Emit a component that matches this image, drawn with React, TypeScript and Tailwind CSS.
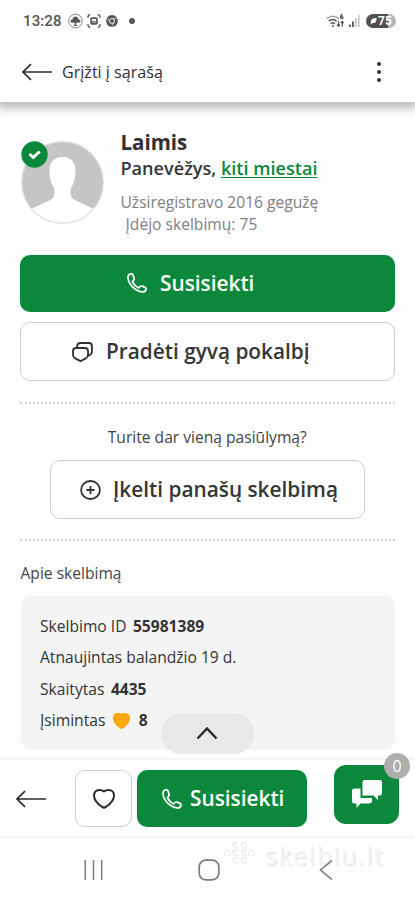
import type { ReactNode } from 'react'

const adDetails = [
  { label: 'Skelbimo ID', value: '55981389' },
  { label: 'Atnaujintas balandžio 19 d.', value: '' },
  { label: 'Skaitytas', value: '4435' },
  { label: 'Įsimintas', value: '8', liked: true },
]

function BackArrow() {
  return (
    <svg width="30" height="18" viewBox="0 0 30 18" fill="none" stroke="#2b2b2b" strokeWidth="1.7" className="shrink-0">
      <path d="M9 1.2 1 9l8 7.8M1 9h29" />
    </svg>
  )
}

function PhoneIcon() {
  return (
    <svg width="20" height="20" viewBox="0 0 20 20" fill="none" stroke="#fff" strokeWidth="1.7" strokeLinejoin="round" className="shrink-0">
      <path d="M3.200 1C1.700 1.500.9 3 1 5c.6 6.500 7.500 13.400 14.300 14 2 .1 3.500-1 3.700-2.900.1-1.100-.4-1.600-1.400-2l-2.600-1c-1-.3-1.700 0-2.500.9l-.8.9C9 13.600 6.400 11 5.300 8.400l1-.8c.9-.8 1.100-1.500.8-2.500L6 2C5.500.8 4.400.6 3.200 1Z" />
    </svg>
  )
}

function ChatIcon() {
  return (
    <svg width="21" height="20" viewBox="0 0 21 20" fill="none" stroke="#303030" strokeWidth="1.8" strokeLinejoin="round" className="shrink-0">
      <path d="M4.200 6h8.600Q16 6 16 9v3.800q0 2.600-2.200 3.600l-5.300 2.700-5.300-2.700Q1 15.400 1 12.800V9q0-3 3.200-3Z" />
      <path d="M5.200 5.600V4.200Q5.400 1 8.400 1h8.400Q20 1 20 4v5q0 3.500-3.800 4.800" />
    </svg>
  )
}

function StatusBar() {
  return (
    <div className="flex h-[42px] items-center pl-[23px] pr-[19px]">
      <span className="w-[45px] whitespace-nowrap font-['Roboto'] text-[15px] font-medium leading-5 tracking-[0.1px] text-[#555]">13:28</span>
      <svg width="15" height="16" viewBox="0 0 15 16" className="shrink-0">
        <circle cx="7.500" cy="8" r="6.800" fill="none" stroke="#888" />
        <path d="M2.500 9c0-2 1-2.500 2-2.500C4.700 4.500 6 3.600 7.500 3.600s2.800.9 3 2.900c1.200 0 2 .7 2 2.500-1.500 1-2.700.7-4.200.4v2.500l1.700 1H5l1.700-1V9.400c-1.500.3-2.700.6-4.200-.4Z" fill="#555" />
      </svg>
      <svg width="14" height="16" viewBox="0 0 14 16" className="ml-1 shrink-0" fill="none" stroke="#555" strokeWidth="1.300">
        <path d="M1 5V4q0-2.300 2.300-2.300M10.700 1.700Q13 1.700 13 4v1M13 11v1q0 2.300-2.300 2.300M3.300 14.300Q1 14.300 1 12v-1" />
        <rect x="4" y="5.200" width="6" height="5.600" rx="1" strokeWidth="1.700" />
        <path d="m4.500 10 2-1.500 3 1" />
      </svg>
      <svg width="12" height="12" viewBox="0 0 12 12" className="ml-[5px] shrink-0">
        <circle cx="6" cy="6" r="5.900" fill="#555" />
        <circle cx="6" cy="6" r="2.500" fill="#555" stroke="#eee" />
        <path d="M6 3.500h5M3.800 7.300 1.300 3M8.200 7.300 5.700 11.600" stroke="#ddd" strokeWidth=".7" />
      </svg>
      <span className="ml-[11px] size-[6px] rounded-full bg-[#555]" />
      <div className="ml-auto flex items-center">
        <svg width="19" height="14" viewBox="0 0 19 14" fill="none" stroke="#555" strokeWidth="1.400">
          <path d="M.8 4.600q6-5 12 0" stroke="#999" />
          <path d="M2.700 7.200q4-3.500 8 0M4.600 9.700q2.200-2 4.400 0" />
          <circle cx="6.900" cy="12" r="1" fill="#555" stroke="none" />
          <path d="M17 .8h-1.200q-1.300 0-1.300 2.200 0 1.700 1.300 1.700t1.300-1-1.300-1-1.300.8" strokeWidth="1.200" />
          <path d="M12.500 7v5m-1.400-1.500 1.400 1.700 1.400-1.700M16.300 12.700V7.500m-1.400 1.700 1.400-1.700 1.400 1.700" strokeWidth="1.200" />
        </svg>
        <svg width="11" height="14" viewBox="0 0 11 14" className="ml-[4px]">
          <rect y="10.500" width="1.800" height="2.500" fill="#555" />
          <rect x="3" y="7.500" width="1.800" height="5.500" fill="#555" />
          <rect x="6" y="4" width="1.600" height="9" fill="#c4c4c4" />
          <rect x="9" y="1" width="1.600" height="12" fill="#c4c4c4" />
        </svg>
        <span className="ml-[6px] flex h-[14px] w-[30px] items-center justify-center rounded-full bg-linear-to-r from-[#505050] from-75% to-[#b5b5b5] to-75% font-['Roboto'] text-[12px] font-bold leading-[14px] text-white">
          <svg width="7" height="8" viewBox="0 0 7 8" fill="#fff" className="mr-px">
            <path d="M1 4.500C1 1.500 4 1 6.500 1 6.800 4 5.500 6.500 2.500 6L.5 7.500Z" />
          </svg>
          75
        </span>
      </div>
    </div>
  )
}

function OutlineButton({ className, children }: { className: string; children: ReactNode }) {
  return (
    <button className={`flex items-center rounded-[10px] border border-[#cecece] whitespace-nowrap text-[20.800px] font-semibold text-[#363636] ${className}`}>
      {children}
    </button>
  )
}

function Seller() {
  return (
    <section className="flex h-[152.500px] pl-[20.500px] pt-[28px]">
      <div className="relative mt-[11px] size-[83px] shrink-0">
        <svg width="83" height="83" viewBox="0 0 83 83">
          <defs>
            <clipPath id="avatar">
              <circle cx="41.500" cy="41.500" r="40.500" />
            </clipPath>
          </defs>
          <g clipPath="url(#avatar)">
            <path fill="#c5c5c5" d="M0 0h83v83H0z" />
            <path fill="#fff" d="M41.500 16C33 16 28.500 22 28.500 29c0 8 1.500 14 5 18.500V52q0 5-4 7L10 68 0 75v8h83v-8l-10-7-19.500-9q-4-2-4-7v-4.500c3.500-4.500 5-10.500 5-18.500 0-7-4.500-13-13-13Z" />
          </g>
          <circle cx="41.500" cy="41.500" r="40.800" fill="none" stroke="#ddd" strokeWidth="1.200" />
        </svg>
        <svg width="27" height="27" viewBox="0 0 27 27" className="absolute left-0 top-0">
          <circle cx="13.500" cy="13.500" r="13.200" fill="#0b883b" />
          <path d="m8.500 13 3.800 3.500 6.400-6" fill="none" stroke="#fff" strokeWidth="3" />
        </svg>
      </div>
      <div className="ml-[17px] whitespace-nowrap">
        <h1 className="text-[20.500px] font-bold leading-[25px] text-[#303030]">Laimis</h1>
        <p className="text-[18.100px] font-semibold leading-[27px] text-[#363636]">
          Panevėžys, <a className="text-[#0b883b] underline underline-offset-2">kiti miestai</a>
        </p>
        <p className="mt-[9px] text-[15.600px] leading-[22px] text-[#808080]">Užsiregistravo 2016 gegužę</p>
        <p className="ml-[5px] text-[15.600px] leading-[22px] text-[#808080]">Įdėjo skelbimų: 75</p>
      </div>
    </section>
  )
}

function BottomBar() {
  return (
    <div className="flex h-[80px] items-start border-y-2 border-[#f5f5f5] bg-white pl-[16px] pt-[10px]">
      <div className="flex h-[57px] w-[59px] items-center">
        <BackArrow />
      </div>
      <button className="flex h-[57px] w-[57px] items-center justify-center rounded-[10px] border border-[#cecece]">
        <svg width="22" height="20" viewBox="0 0 22 20" fill="none" stroke="#2b2b2b" strokeWidth="2" strokeLinejoin="round" className="-mr-px mt-px">
          <path d="M11 2.400C9.500 1.400 8 1 6.200 1 3.200 1 1 3.300 1 6.500c0 5.200 4.200 8.800 8.200 11.400q1.800 1.400 3.600 0C16.800 15.300 21 11.700 21 6.500 21 3.300 18.800 1 15.800 1 14 1 12.500 1.400 11 2.400Z" />
        </svg>
      </button>
      <button className="ml-[5px] flex h-[57px] w-[170px] items-center rounded-[10px] bg-[#0b883b] pl-[25px] text-[20.800px] font-semibold text-white">
        <PhoneIcon />
        <span className="ml-[8px] whitespace-nowrap">Susisiekti</span>
      </button>
      <button className="relative -mt-[5.500px] ml-[27px] flex h-[59px] w-[65px] items-center justify-center rounded-[12px] bg-[#0b883b]">
        <svg width="32" height="30" viewBox="0 0 32 30" fill="#fff">
          <path d="M14 1h14.500q2.500 0 2.500 2.500v10.500q0 2.500-2.500 2.500H27V21l-4.500-4.500H11.500V3.500Q11.500 1 14 1Z" />
          <path d="M9.500 9.500v9.500h11.500v3q0 2-2.500 2.500H9.500L5.500 29v-4.500H3.500q-2.500 0-2.500-2.500V12q0-2.500 2.500-2.500Z" />
        </svg>
        <span className="absolute -right-[11px] -top-[12px] flex size-[26px] items-center justify-center rounded-full bg-[#aeaeae] text-[16px] text-white">0</span>
      </button>
    </div>
  )
}

function SystemNav() {
  return (
    <nav className="relative h-[62px] bg-[#fefefe]">
      <div className="absolute left-[223px] top-0 flex items-center text-[#f5f5f5]">
        <svg width="33" height="24" viewBox="0 0 33 24" fill="none" stroke="#ececec" strokeWidth="1.500" strokeDasharray="5 2" className="-mt-1">
          <path d="M10 2h4v5h-4zM19 2h4v5h-4zM2 9.500h5v5H2zM10 9.500h4v5h-4zM19 9.500h4v5h-4zM26 9.500h5v5h-5zM10 17h4v5h-4zM19 17h4v5h-4z" />
        </svg>
        <span className="ml-[9px] text-[25px] font-medium leading-[34px] tracking-[1.500px] [text-shadow:1px_1px_0_#e4e4e4]">skelbiu.lt</span>
      </div>
      <div className="relative flex h-full items-center pl-[84px] pt-[2px]">
        <svg width="19" height="20" viewBox="0 0 19 20" stroke="#7c7c7c" strokeWidth="1.500">
          <path d="M1.300 0v20M9.500 0v20M17.700 0v20" />
        </svg>
        <svg width="22" height="22" viewBox="0 0 22 22" fill="none" stroke="#7c7c7c" strokeWidth="1.700" className="ml-[95px]">
          <rect x="1.200" y="1.200" width="19.600" height="19.600" rx="6.500" />
        </svg>
        <svg width="14" height="20" viewBox="0 0 14 20" fill="none" stroke="#7c7c7c" strokeWidth="1.600" className="ml-[99px]">
          <path d="M13 .5 1.500 10 13 19.500" />
        </svg>
      </div>
    </nav>
  )
}

export default function App() {
  return (
    <div className="flex h-[900px] w-[415px] flex-col overflow-hidden bg-[#fefefe] font-['Open_Sans','Noto_Sans',sans-serif] text-[#333]">
      <header className="h-[102px] shrink-0 bg-[#fefefe] shadow-[0_3px_9px_3px_rgba(0,0,0,0.28)]">
        <StatusBar />
        <div className="flex h-[60px] items-center pl-[22px] pr-[34px]">
          <BackArrow />
          <span className="ml-[10px] whitespace-nowrap text-[16.100px] font-medium text-[#303030]">Grįžti į sąrašą</span>
          <div className="ml-auto flex flex-col gap-[4px]">
            <span className="size-[4px] rounded-full bg-[#333]" />
            <span className="size-[4px] rounded-full bg-[#333]" />
            <span className="size-[4px] rounded-full bg-[#333]" />
          </div>
        </div>
      </header>

      <main className="relative h-[656px] shrink-0">
        <Seller />
        <div className="pl-[20px] pr-[20.500px]">
          <button className="flex h-[57px] w-full items-center rounded-[10px] bg-[#0b883b] pl-[107px] text-[20.800px] font-semibold text-white">
            <PhoneIcon />
            <span className="ml-[13px] mt-px whitespace-nowrap">Susisiekti</span>
          </button>
          <OutlineButton className="mt-[10.500px] h-[59px] w-full pl-[51px]">
            <ChatIcon />
            <span className="ml-[13px]">Pradėti gyvą pokalbį</span>
          </OutlineButton>
          <hr className="mt-[21px] border-t-2 border-dotted border-[#d2d2d2]" />
          <p className="mt-[22px] text-center text-[15.600px] leading-[22px] text-[#444]">Turite dar vieną pasiūlymą?</p>
          <OutlineButton className="ml-[30px] mt-[12px] h-[59px] w-[315px] pl-[29px]">
            <svg width="21" height="20" viewBox="0 0 21 20" fill="none" stroke="#303030" strokeWidth="1.800">
              <ellipse cx="10.500" cy="10" rx="9.400" ry="9" />
              <path d="M10.500 6v8M6.500 10h8" />
            </svg>
            <span className="ml-[12px]">Įkelti panašų skelbimą</span>
          </OutlineButton>
          <hr className="mt-[20px] border-t-2 border-dotted border-[#d2d2d2]" />
          <h2 className="ml-[0.500px] mt-[19.500px] text-[15.600px] leading-[24px] text-[#444]">Apie skelbimą</h2>
          <dl className="ml-[0.500px] mt-[11.500px] h-[154px] rounded-[10px] bg-[#f4f4f4] pl-[19.500px] pt-[14.500px] text-[15.600px] text-[#333]">
            {adDetails.map((row) => (
              <div key={row.label} className="flex h-[31.500px] items-center whitespace-nowrap">
                <dt>{row.label}</dt>
                {row.liked && (
                  <svg width="17" height="16" viewBox="0 0 17 16" fill="#fba70e" className="ml-[8px] mr-[2px]">
                    <path d="M8.500.4C7.200.1 6 0 4.600 0 2 0 0 1.800 0 5c0 4.800 3.500 8 6.800 10.200q1.700 1.200 3.400 0C13.500 13 17 9.800 17 5c0-3.200-2-5-4.600-5-1.400 0-2.600.1-3.900.4Z" />
                  </svg>
                )}
                <dd className="ml-[6.500px] font-bold">{row.value}</dd>
              </div>
            ))}
          </dl>
        </div>
        {/* Scroll to top */}
        <button className="absolute left-[161px] top-[611px] flex h-[41px] w-[93px] items-center justify-center rounded-full bg-[#e8e8e8]">
          <svg width="22" height="14" viewBox="0 0 22 14" fill="none" stroke="#2b2b2b" strokeWidth="2.500" className="-mt-px mr-px">
            <path d="m1.500 12.500 9.500-10 9.500 10" />
          </svg>
        </button>
      </main>

      <BottomBar />
      <SystemNav />
    </div>
  )
}
